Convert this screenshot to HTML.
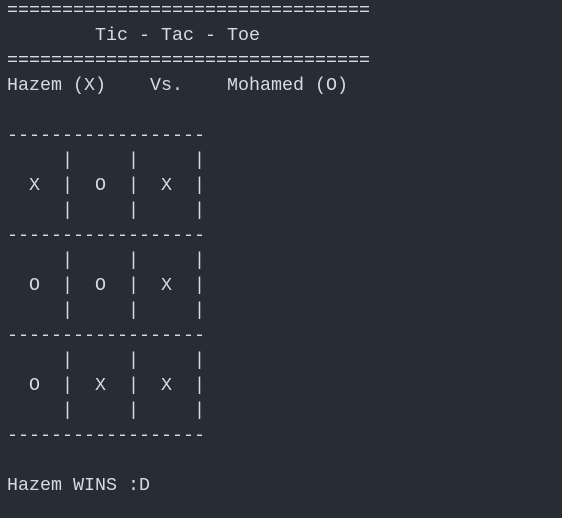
<!DOCTYPE html>
<html><head><meta charset="utf-8"><style>
html,body{margin:0;padding:0;background:#282c34;width:562px;height:518px;overflow:hidden}
pre{margin:0;position:absolute;left:7px;top:-2px;font-family:"Liberation Mono","DejaVu Sans Mono",monospace;font-size:18.33px;line-height:25px;color:#d7dae0}
</style></head><body><pre>=================================
        Tic - Tac - Toe
=================================
Hazem (X)    Vs.    Mohamed (O)

------------------
     |     |     |
  X  |  O  |  X  |
     |     |     |
------------------
     |     |     |
  O  |  O  |  X  |
     |     |     |
------------------
     |     |     |
  O  |  X  |  X  |
     |     |     |
------------------

Hazem WINS :D</pre></body></html>
